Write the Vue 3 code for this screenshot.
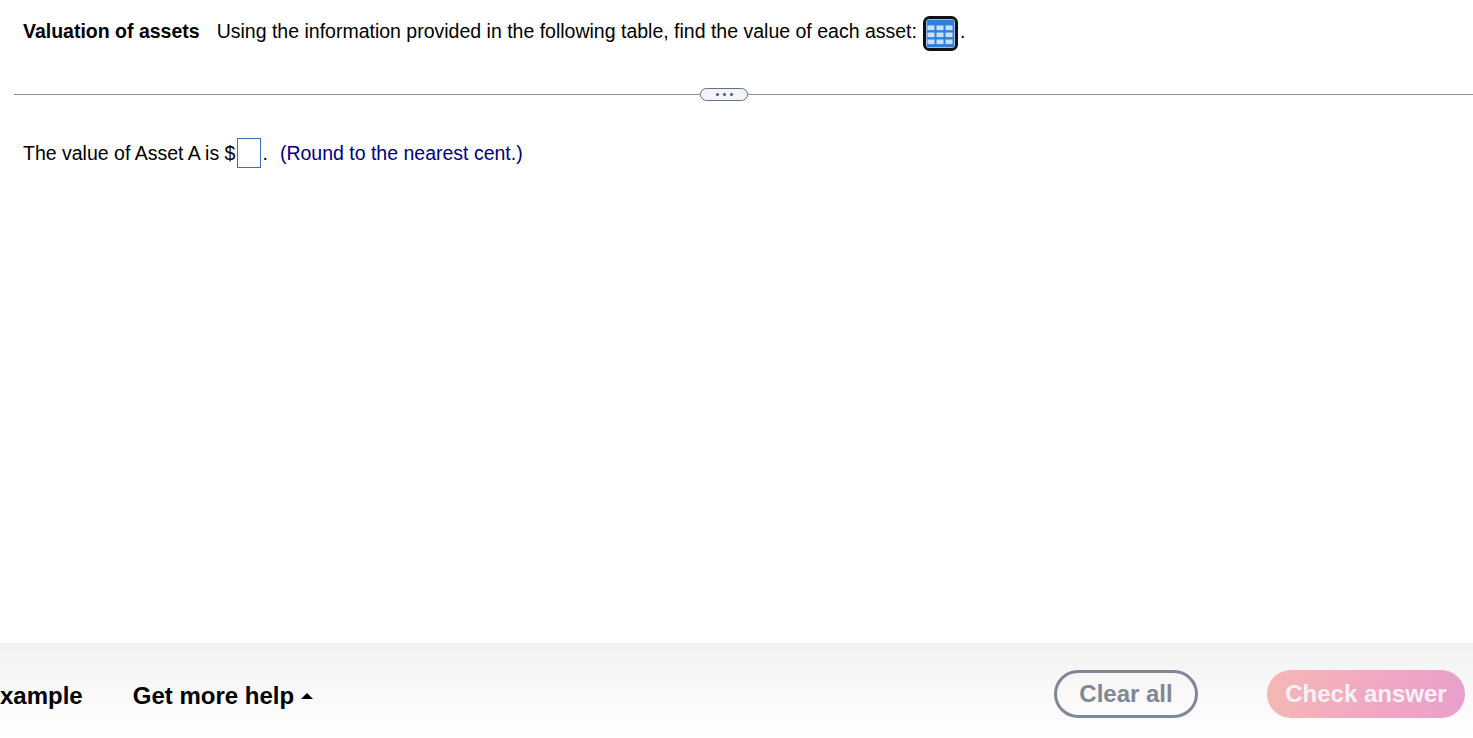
<script setup>
const xs = [4.5, 13.5, 22.5]
const ys = [9.5, 16.5, 23.5]
const cells = ys.flatMap((y) => xs.map((x) => ({ x, y })))
</script>

<template>
  <div class="page">
    <section class="question">
      <span class="title">Valuation of assets</span>
      <span class="prompt">Using the information provided in the following table, find the value of each asset:</span>
      <span class="table-icon">
        <svg width="35" height="35" viewBox="0 0 35 35">
          <rect x="1.5" y="1.5" width="32" height="32" rx="5" fill="#fff" stroke="#111" stroke-width="3" />
          <rect x="3.5" y="3.5" width="28" height="28" rx="2" fill="#2f7fe0" />
          <rect v-for="(c, i) in cells" :key="i" :x="c.x" :y="c.y" width="7" height="4.6" fill="#c9dffa" />
        </svg>
      </span>
      <span class="prompt period">.</span>
    </section>

    <div class="divider">
      <span class="line short"></span>
      <span class="pill"><i></i><i></i><i></i></span>
      <span class="line"></span>
    </div>

    <section class="answer">
      <span>The value of Asset A is $</span><span class="input"></span><span class="dot">.</span>
      <span class="hint">(Round to the nearest cent.)</span>
    </section>

    <footer class="footer">
      <span class="link example">Example</span>
      <span class="link help">Get more help <span class="caret"></span></span>
      <span class="spacer"></span>
      <button class="btn clear">Clear all</button>
      <button class="btn check">Check answer</button>
    </footer>
  </div>
</template>

<style>
html, body { margin: 0; background: #fff; overflow: hidden; }
</style>

<style scoped>
.page {
  width: 1473px;
  height: 738px;
  display: flex;
  flex-direction: column;
  font-family: "Liberation Sans", Arial, sans-serif;
  color: #000;
  overflow: hidden;
}
.question {
  display: flex;
  align-items: center;
  height: 34px;
  margin-top: 14px;
  padding-left: 23px;
  font-size: 19.5px;
}
.title { font-weight: 700; margin-right: 17px; }
.table-icon { display: flex; margin-left: 6px; margin-top: 4px; }
.period { margin-left: 2px; }
.divider {
  display: flex;
  align-items: center;
  margin-top: 39px;
  margin-left: 14px;
  height: 14px;
}
.line { flex: 1; height: 1px; background: #8592a6; }
.line.short { flex: 0 0 686px; }
.pill {
  width: 48px;
  height: 13px;
  box-sizing: border-box;
  border: 1px solid #64708a;
  border-radius: 7px;
  background: #f2f4f7;
  display: flex;
  align-items: center;
  justify-content: center;
  gap: 4px;
}
.pill i { width: 3px; height: 3px; border-radius: 50%; background: #4a5568; }
.answer {
  display: flex;
  align-items: center;
  height: 32px;
  margin-top: 36px;
  padding-left: 23px;
  font-size: 19.5px;
  white-space: pre;
}
.input {
  width: 24px;
  height: 30px;
  box-sizing: border-box;
  border: 1px solid #3a6fc4;
  margin-left: 2px;
}
.dot { margin-left: 1px; }
.hint { color: #00007f; margin-left: 12px; }
.footer {
  margin-top: auto;
  height: 95px;
  flex: none;
  display: flex;
  align-items: center;
  background: linear-gradient(#f2f2f2, #fff);
  padding-right: 8px;
}
.link { font-size: 24px; font-weight: 700; position: relative; top: 5px; }
.example { margin-left: -16px; }
.help { margin-left: 50px; display: flex; align-items: center; white-space: pre; }
.caret {
  width: 0;
  height: 0;
  border-left: 6px solid transparent;
  border-right: 6px solid transparent;
  border-bottom: 6px solid #000;
}
.spacer { flex: 1; }
.btn {
  height: 48px;
  border-radius: 24px;
  font: 700 24px "Liberation Sans", Arial, sans-serif;
  box-sizing: border-box;
  padding: 0;
  margin-top: 7px;
}
.clear {
  width: 144px;
  background: transparent;
  border: 3px solid #808796;
  color: #808796;
}
.check {
  width: 198px;
  margin-left: 69px;
  border: 0;
  color: #f8f2f7;
  background: linear-gradient(100deg, #f4b8b4, #f0a6c4 60%, #e8a0cc);
}
</style>
